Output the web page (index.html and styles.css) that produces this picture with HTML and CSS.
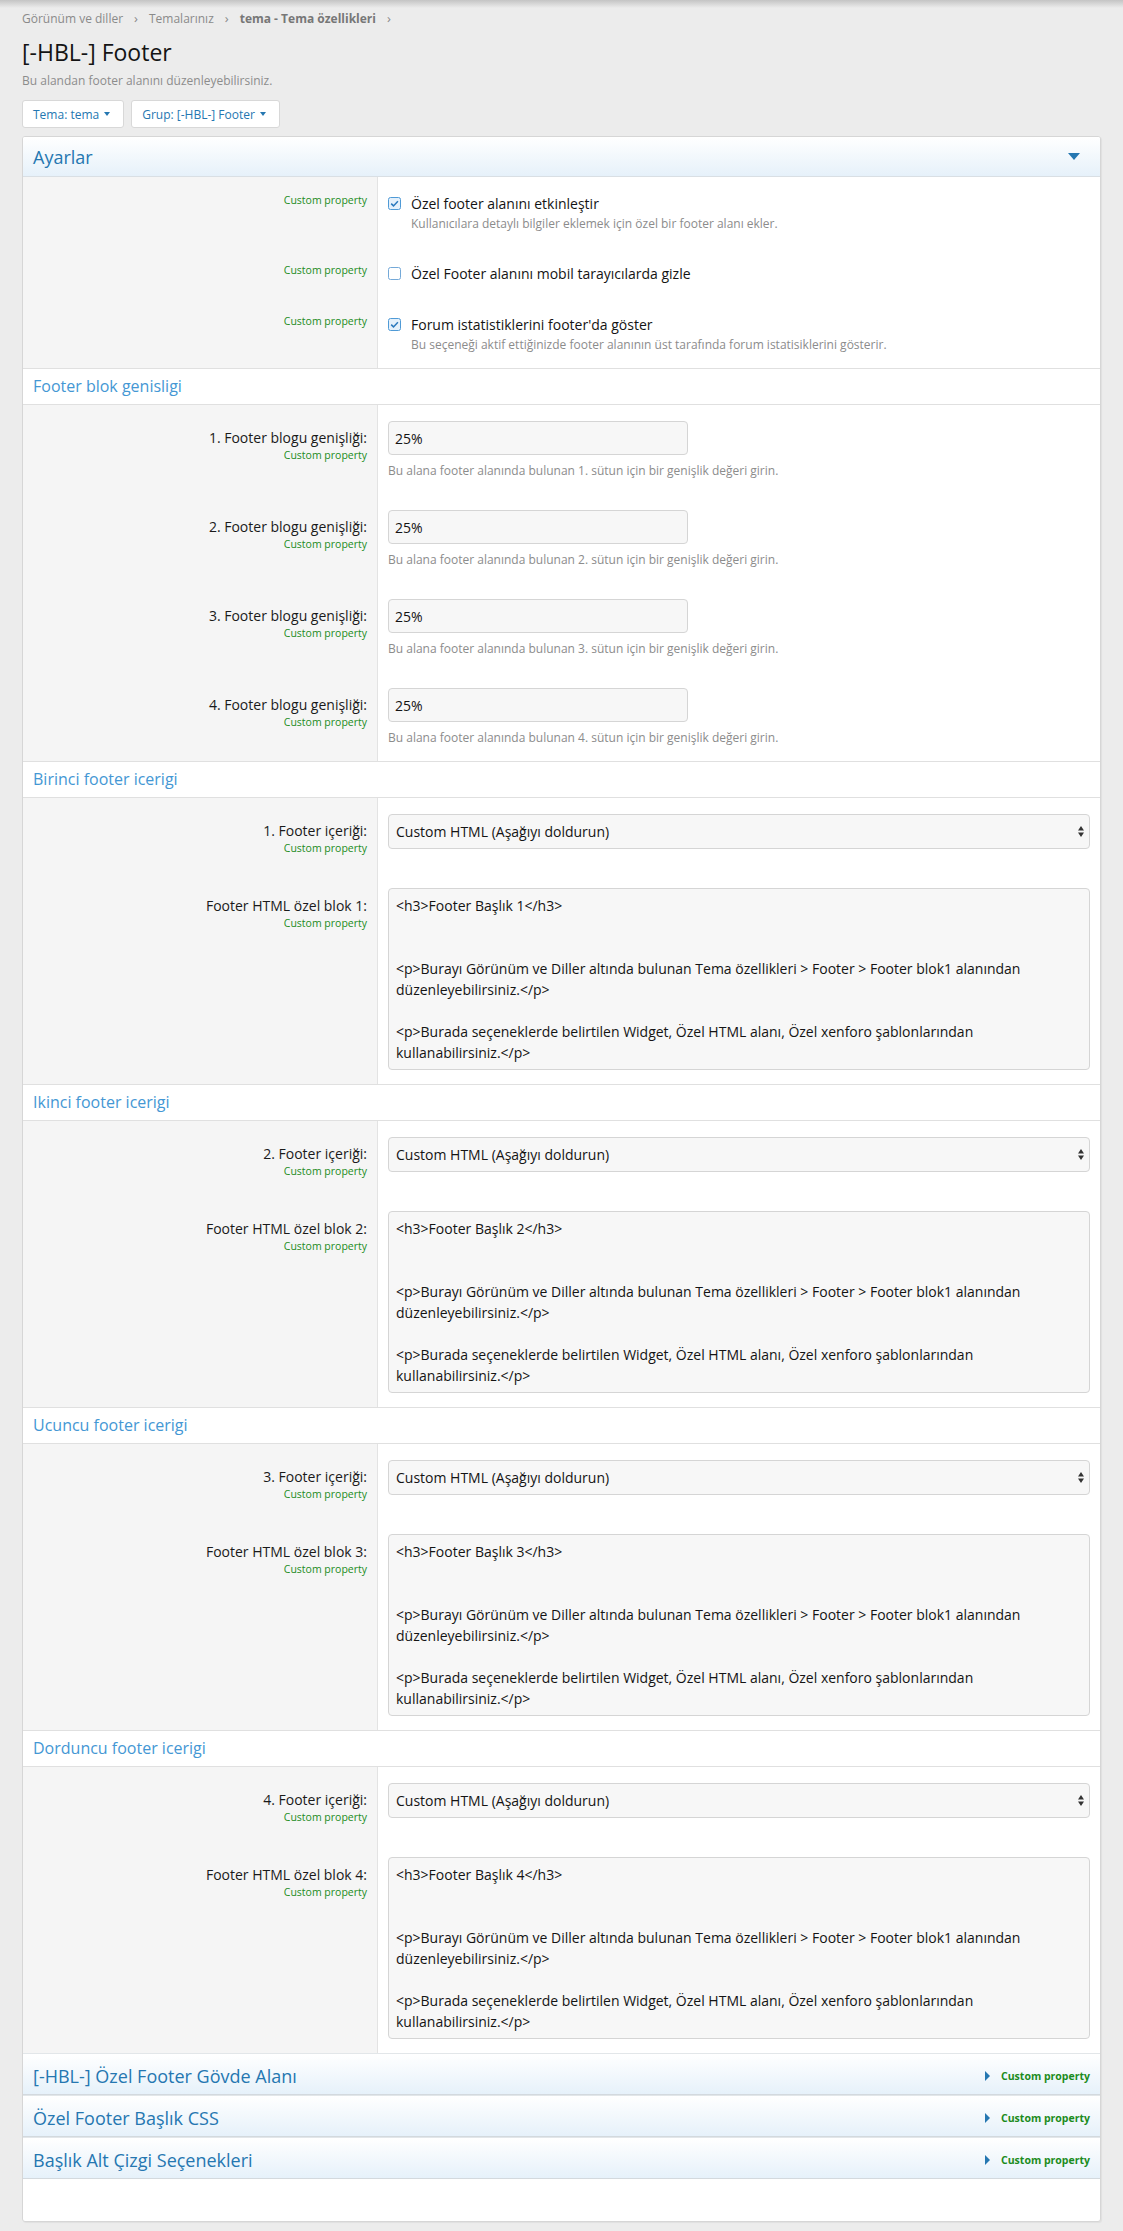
FILE: index.html
```html
<!DOCTYPE html>
<html lang="tr">
<head>
<meta charset="utf-8">
<title>[-HBL-] Footer</title>
<link rel="stylesheet" href="styles.css">
</head>
<body>
<div class="page">
  <nav class="crumbs">
    <a class="crumb">Görünüm ve diller</a><span class="sep">›</span>
    <a class="crumb">Temalarınız</a><span class="sep">›</span>
    <a class="crumb cur">tema - Tema özellikleri</a><span class="sep">›</span>
  </nav>
  <h1 class="title">[-HBL-] Footer</h1>
  <p class="desc">Bu alandan footer alanını düzenleyebilirsiniz.</p>
  <div class="filters">
    <button class="btn btn-tema">Tema: tema <span class="caret"></span></button>
    <button class="btn">Grup: [-HBL-] Footer <span class="caret"></span></button>
  </div>

  <div class="block">
    <h2 class="blockHead"><span>Ayarlar</span>
      <svg class="down" width="12" height="7" viewBox="0 0 12 7"><path d="M0 0 H12 L6 7 Z" fill="#2577b1"/></svg>
    </h2>

    <div class="row">
      <div class="dt"><div class="hint">Custom property</div></div>
      <div class="dd">
        <label class="check">
          <svg class="cb" width="13" height="13" viewBox="0 0 13 13"><rect x="0.5" y="0.5" width="12" height="12" rx="2" fill="#e4f0fb" stroke="#4f9ad6"/><path d="M3.2 6.6 L5.5 8.9 L9.9 4.2" fill="none" stroke="#2a78bd" stroke-width="1.5"/></svg>
          <span>Özel footer alanını etkinleştir</span>
        </label>
        <div class="explain tight">Kullanıcılara detaylı bilgiler eklemek için özel bir footer alanı ekler.</div>
      </div>
    </div>
    <div class="row">
      <div class="dt"><div class="hint">Custom property</div></div>
      <div class="dd">
        <label class="check">
          <svg class="cb" width="13" height="13" viewBox="0 0 13 13"><rect x="0.5" y="0.5" width="12" height="12" rx="2" fill="#ffffff" stroke="#74a9d8"/></svg>
          <span>Özel Footer alanını mobil tarayıcılarda gizle</span>
        </label>
      </div>
    </div>
    <div class="row">
      <div class="dt"><div class="hint">Custom property</div></div>
      <div class="dd">
        <label class="check">
          <svg class="cb" width="13" height="13" viewBox="0 0 13 13"><rect x="0.5" y="0.5" width="12" height="12" rx="2" fill="#e4f0fb" stroke="#4f9ad6"/><path d="M3.2 6.6 L5.5 8.9 L9.9 4.2" fill="none" stroke="#2a78bd" stroke-width="1.5"/></svg>
          <span>Forum istatistiklerini footer'da göster</span>
        </label>
        <div class="explain tight">Bu seçeneği aktif ettiğinizde footer alanının üst tarafında forum istatisiklerini gösterir.</div>
      </div>
    </div>

    <h3 class="sectionHead">Footer blok genisligi</h3>
    <div class="row is-input">
      <div class="dt"><div class="label">1. Footer blogu genişliği:</div><div class="hint">Custom property</div></div>
      <div class="dd"><input class="input" type="text" value="25%"><div class="explain">Bu alana footer alanında bulunan 1. sütun için bir genişlik değeri girin.</div></div>
    </div>
    <div class="row is-input">
      <div class="dt"><div class="label">2. Footer blogu genişliği:</div><div class="hint">Custom property</div></div>
      <div class="dd"><input class="input" type="text" value="25%"><div class="explain">Bu alana footer alanında bulunan 2. sütun için bir genişlik değeri girin.</div></div>
    </div>
    <div class="row is-input">
      <div class="dt"><div class="label">3. Footer blogu genişliği:</div><div class="hint">Custom property</div></div>
      <div class="dd"><input class="input" type="text" value="25%"><div class="explain">Bu alana footer alanında bulunan 3. sütun için bir genişlik değeri girin.</div></div>
    </div>
    <div class="row is-input">
      <div class="dt"><div class="label">4. Footer blogu genişliği:</div><div class="hint">Custom property</div></div>
      <div class="dd"><input class="input" type="text" value="25%"><div class="explain">Bu alana footer alanında bulunan 4. sütun için bir genişlik değeri girin.</div></div>
    </div>

    <h3 class="sectionHead">Birinci footer icerigi</h3>
    <div class="row is-select">
      <div class="dt"><div class="label">1. Footer içeriği:</div><div class="hint">Custom property</div></div>
      <div class="dd"><div class="selectWrap"><select class="select"><option>Custom HTML (Aşağıyı doldurun)</option></select><svg class="updown" width="6" height="11" viewBox="0 0 6 11"><path d="M0 4.5 L3 0 L6 4.5 Z M0 6.5 L6 6.5 L3 11 Z" fill="#333"/></svg></div></div>
    </div>
    <div class="row is-area">
      <div class="dt"><div class="label">Footer HTML özel blok 1:</div><div class="hint">Custom property</div></div>
      <div class="dd"><textarea class="area" wrap="off" readonly>&lt;h3&gt;Footer Başlık 1&lt;/h3&gt;


&lt;p&gt;Burayı Görünüm ve Diller altında bulunan Tema özellikleri &gt; Footer &gt; Footer blok1 alanından
düzenleyebilirsiniz.&lt;/p&gt;

&lt;p&gt;Burada seçeneklerde belirtilen Widget, Özel HTML alanı, Özel xenforo şablonlarından
kullanabilirsiniz.&lt;/p&gt;</textarea></div>
    </div>

    <h3 class="sectionHead">Ikinci footer icerigi</h3>
    <div class="row is-select">
      <div class="dt"><div class="label">2. Footer içeriği:</div><div class="hint">Custom property</div></div>
      <div class="dd"><div class="selectWrap"><select class="select"><option>Custom HTML (Aşağıyı doldurun)</option></select><svg class="updown" width="6" height="11" viewBox="0 0 6 11"><path d="M0 4.5 L3 0 L6 4.5 Z M0 6.5 L6 6.5 L3 11 Z" fill="#333"/></svg></div></div>
    </div>
    <div class="row is-area">
      <div class="dt"><div class="label">Footer HTML özel blok 2:</div><div class="hint">Custom property</div></div>
      <div class="dd"><textarea class="area" wrap="off" readonly>&lt;h3&gt;Footer Başlık 2&lt;/h3&gt;


&lt;p&gt;Burayı Görünüm ve Diller altında bulunan Tema özellikleri &gt; Footer &gt; Footer blok1 alanından
düzenleyebilirsiniz.&lt;/p&gt;

&lt;p&gt;Burada seçeneklerde belirtilen Widget, Özel HTML alanı, Özel xenforo şablonlarından
kullanabilirsiniz.&lt;/p&gt;</textarea></div>
    </div>

    <h3 class="sectionHead">Ucuncu footer icerigi</h3>
    <div class="row is-select">
      <div class="dt"><div class="label">3. Footer içeriği:</div><div class="hint">Custom property</div></div>
      <div class="dd"><div class="selectWrap"><select class="select"><option>Custom HTML (Aşağıyı doldurun)</option></select><svg class="updown" width="6" height="11" viewBox="0 0 6 11"><path d="M0 4.5 L3 0 L6 4.5 Z M0 6.5 L6 6.5 L3 11 Z" fill="#333"/></svg></div></div>
    </div>
    <div class="row is-area">
      <div class="dt"><div class="label">Footer HTML özel blok 3:</div><div class="hint">Custom property</div></div>
      <div class="dd"><textarea class="area" wrap="off" readonly>&lt;h3&gt;Footer Başlık 3&lt;/h3&gt;


&lt;p&gt;Burayı Görünüm ve Diller altında bulunan Tema özellikleri &gt; Footer &gt; Footer blok1 alanından
düzenleyebilirsiniz.&lt;/p&gt;

&lt;p&gt;Burada seçeneklerde belirtilen Widget, Özel HTML alanı, Özel xenforo şablonlarından
kullanabilirsiniz.&lt;/p&gt;</textarea></div>
    </div>

    <h3 class="sectionHead">Dorduncu footer icerigi</h3>
    <div class="row is-select">
      <div class="dt"><div class="label">4. Footer içeriği:</div><div class="hint">Custom property</div></div>
      <div class="dd"><div class="selectWrap"><select class="select"><option>Custom HTML (Aşağıyı doldurun)</option></select><svg class="updown" width="6" height="11" viewBox="0 0 6 11"><path d="M0 4.5 L3 0 L6 4.5 Z M0 6.5 L6 6.5 L3 11 Z" fill="#333"/></svg></div></div>
    </div>
    <div class="row is-area">
      <div class="dt"><div class="label">Footer HTML özel blok 4:</div><div class="hint">Custom property</div></div>
      <div class="dd"><textarea class="area" wrap="off" readonly>&lt;h3&gt;Footer Başlık 4&lt;/h3&gt;


&lt;p&gt;Burayı Görünüm ve Diller altında bulunan Tema özellikleri &gt; Footer &gt; Footer blok1 alanından
düzenleyebilirsiniz.&lt;/p&gt;

&lt;p&gt;Burada seçeneklerde belirtilen Widget, Özel HTML alanı, Özel xenforo şablonlarından
kullanabilirsiniz.&lt;/p&gt;</textarea></div>
    </div>

    <h2 class="collapsed"><span>[-HBL-] Özel Footer Gövde Alanı</span><span class="cp"><span class="right"></span>Custom property</span></h2>
    <h2 class="collapsed"><span>Özel Footer Başlık CSS</span><span class="cp"><span class="right"></span>Custom property</span></h2>
    <h2 class="collapsed"><span>Başlık Alt Çizgi Seçenekleri</span><span class="cp"><span class="right"></span>Custom property</span></h2>
    <div class="blockFoot"></div>
  </div>
</div>
</body>
</html>
```

FILE: styles.css
```css
* { box-sizing: border-box; }

html { background: #ececec; }

body {
  margin: 0;
  font-family: "Open Sans", "Noto Sans", sans-serif;
  font-size: 14px;
  color: #141414;
  background: linear-gradient(#c4c4c4 0, #ececec 8px) no-repeat, #ececec;
}

.page { padding: 10px 22px 9px; }

.crumbs {
  display: flex;
  align-items: center;
  font-size: 12px;
  line-height: 17px;
  color: #8a8a8a;
}
.crumb { color: #8a8a8a; }
.crumb.cur { font-weight: 700; color: #777; }
.sep { margin: 0 11px; color: #8a8a8a; font-size: 13px; }

.title {
  margin: 11px 0 0;
  font-size: 23px;
  line-height: 28px;
  font-weight: 400;
  color: #141414;
}

.desc {
  margin: 6px 0 0;
  font-size: 12px;
  line-height: 17px;
  color: #8c8c8c;
}

.filters { display: flex; gap: 7px; margin-top: 11px; }

.btn {
  height: 28px;
  padding: 0 13px 0 10px;
  border: 1px solid #d8d8d8;
  border-radius: 3px;
  background: #fff;
  color: #2577b1;
  font-family: "Open Sans", "Noto Sans", sans-serif;
  font-size: 12px;
  display: flex;
  align-items: center;
  gap: 5px;
}
.caret {
  width: 0;
  height: 0;
  border-top: 4px solid #2577b1;
  border-left: 3.5px solid transparent;
  border-right: 3.5px solid transparent;
}

.block {
  margin-top: 8px;
  background: #fff;
  border: 1px solid #d6d6d6;
  border-radius: 3px;
  box-shadow: 1px 1px 1px rgba(0,0,0,0.05);
  overflow: hidden;
}

.blockHead {
  margin: 0;
  height: 40px;
  padding: 0 20px 0 10px;
  border-bottom: 1px solid #d9dfe4;
  background: linear-gradient(#ffffff, #e6f1fa);
  display: flex;
  align-items: center;
  justify-content: space-between;
  font-size: 18px;
  font-weight: 400;
  color: #2577b1;
}

.row {
  display: grid;
  grid-template-columns: 355px 1fr;
}

.dt {
  background: #f5f5f5;
  border-right: 1px solid #e3e3e3;
  text-align: right;
  padding: 16px 10px 8px;
}

.dd { padding: 16px 10px 14px; }

.label {
  font-size: 14px;
  line-height: 21px;
  color: #1a1a1a;
}

.hint {
  font-size: 10.5px;
  line-height: 15px;
  color: #1c8c1c;
}

.check {
  display: flex;
  align-items: center;
  gap: 10px;
  font-size: 14px;
  line-height: 21px;
}
.cb { flex: none; }

.explain {
  margin-top: 7px;
  font-size: 12px;
  line-height: 18px;
  color: #8c8c8c;
}
.explain.tight { margin-top: 1px; padding-left: 23px; }

.sectionHead {
  margin: 0;
  height: 37px;
  padding: 0 10px;
  border-top: 1px solid #e0e0e0;
  border-bottom: 1px solid #e0e0e0;
  line-height: 35px;
  font-size: 16px;
  font-weight: 400;
  color: #4497d4;
}

.row.is-input .dt,
.row.is-select .dt { padding-top: 22px; }

.input {
  display: block;
  width: 300px;
  height: 34px;
  padding: 0 6px;
  border: 1px solid #d5d5d5;
  border-radius: 4px;
  background: #f7f7f7;
  font-family: "Open Sans", "Noto Sans", sans-serif;
  font-size: 14px;
  color: #141414;
}

.row.is-select .dd { padding-bottom: 19px; }

.selectWrap { position: relative; }
.select {
  display: block;
  width: 100%;
  height: 35px;
  padding: 0 7px;
  border: 1px solid #d5d5d5;
  border-radius: 4px;
  background: #f7f7f7;
  -webkit-appearance: none;
  appearance: none;
  font-family: "Open Sans", "Noto Sans", sans-serif;
  font-size: 14px;
  color: #141414;
}
.updown {
  position: absolute;
  right: 6px;
  top: 12px;
  pointer-events: none;
}

.row.is-area .dd { padding-top: 20px; padding-bottom: 14px; }
.row.is-area .dt { padding-top: 27px; }

.area {
  display: block;
  width: 100%;
  height: 182px;
  padding: 6px 7px;
  border: 1px solid #d5d5d5;
  border-radius: 4px;
  background: #f7f7f7;
  font-family: "Open Sans", "Noto Sans", sans-serif;
  font-size: 14px;
  line-height: 21px;
  color: #141414;
  white-space: pre;
  resize: none;
  overflow: hidden;
}

.collapsed {
  margin: 0;
  height: 42px;
  padding: 3px 10px 0;
  border-top: 1px solid #e2e6e9;
  border-bottom: 1px solid #d3d9de;
  background: linear-gradient(#ffffff, #e6f1fa);
  display: flex;
  align-items: center;
  justify-content: space-between;
  font-size: 18px;
  font-weight: 400;
  color: #2577b1;
}
.cp {
  display: flex;
  align-items: center;
  gap: 11px;
  font-size: 10.5px;
  font-weight: 700;
  color: #1c8c1c;
}
.right {
  width: 0;
  height: 0;
  border-left: 5px solid #2577b1;
  border-top: 5px solid transparent;
  border-bottom: 5px solid transparent;
}

.blockFoot { height: 42px; }
```
